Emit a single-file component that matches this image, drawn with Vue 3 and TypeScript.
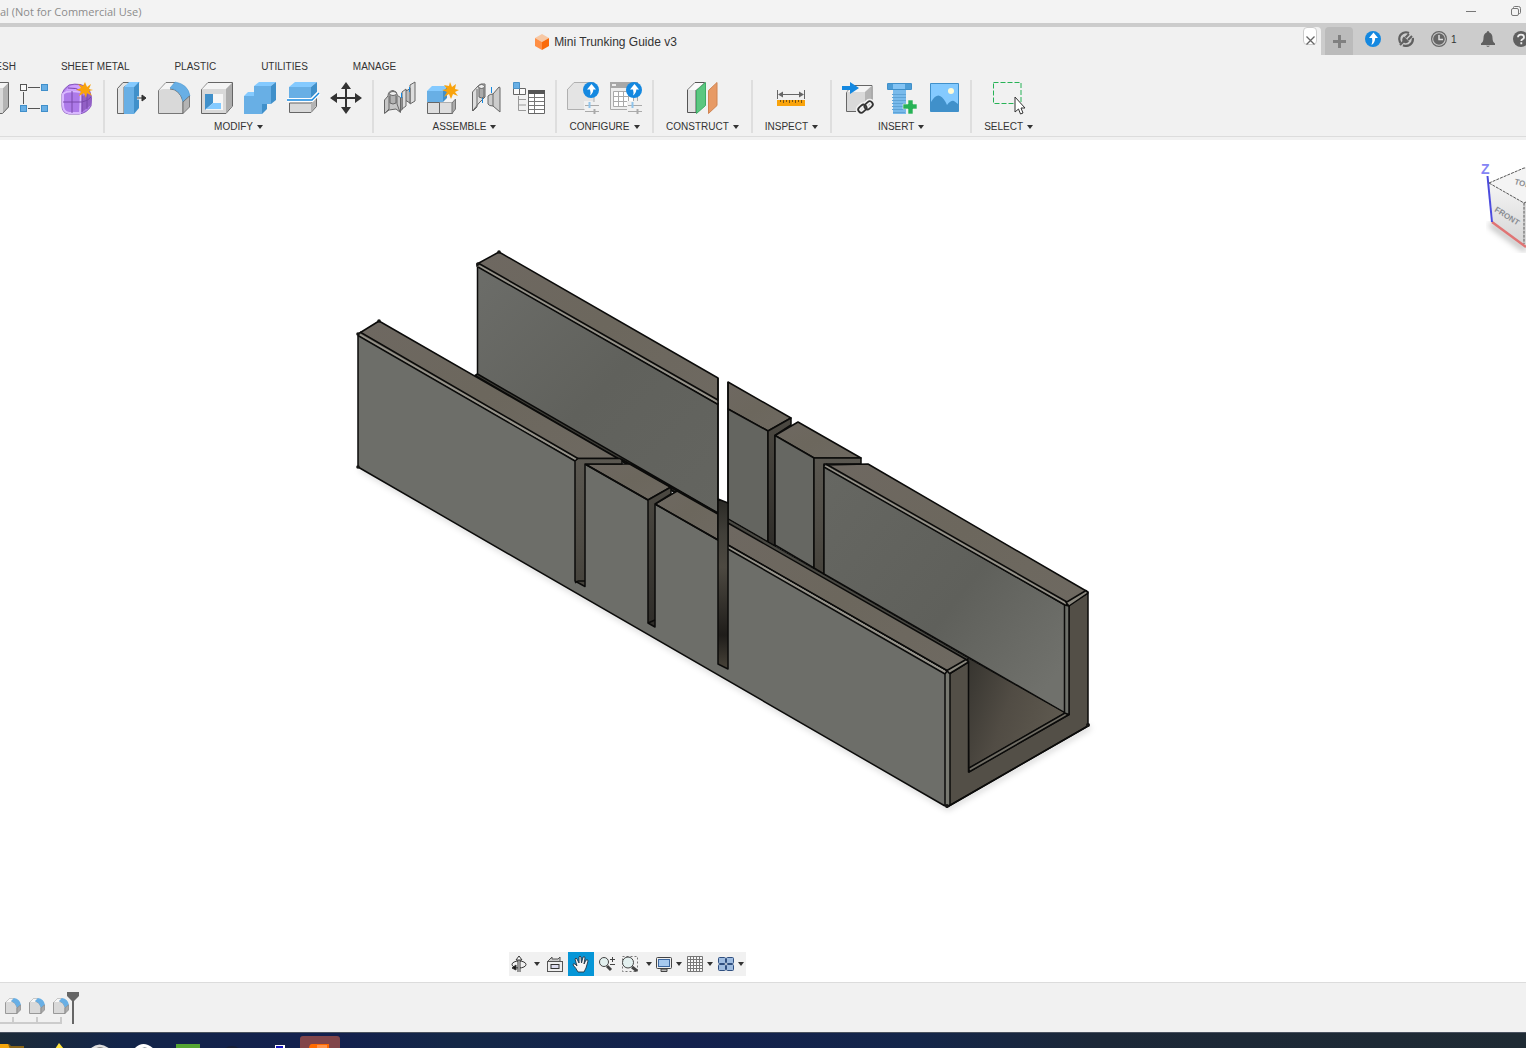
<script setup lang="ts">
import { ref } from 'vue'

const workspaceTabs: string[] = ['MESH', 'SHEET METAL', 'PLASTIC', 'UTILITIES', 'MANAGE']
const activeNav = ref<string>('pan')
const timelineFeatures: string[] = ['Fillet 1', 'Fillet 2', 'Fillet 3']
</script>

<template>
  <div class="app">
    <header class="titlebar">
      <span class="title">al (Not for Commercial Use)</span>
      <div class="window-buttons">
        <button aria-label="Minimize"><svg width="12" height="12" viewBox="0 0 12 12"><path d="M1 5.500h10" stroke="#777" fill="none" /></svg></button>
        <button aria-label="Restore"><svg width="12" height="12" viewBox="0 0 12 12" fill="none" stroke="#777"><rect x="1.500" y="2.500" width="7" height="7" rx="1.500" /><path d="M3.500 2V1.500a1 1 0 0 1 1-1h4a2 2 0 0 1 2 2v4a1 1 0 0 1-1 1H9" /></svg></button>
      </div>
    </header>

    <div class="docbar">
      <div class="doc-tab">
        <div class="doc-name">
          <svg width="14" height="16" viewBox="0 0 14 16"><path d="M7 0l7 4-7 4-7-4z" fill="#f7c8a4" /><path d="M0 4l7 4v8l-7-4z" fill="#ff8f45" /><path d="M14 4L7 8v8l7-4z" fill="#fa6a0a" /></svg>
          <span>Mini Trunking Guide v3</span>
        </div>
        <button class="close" aria-label="Close document"><svg width="9" height="9" viewBox="0 0 9 9"><path d="M.5.500l8 8M8.500.500l-8 8" stroke="#666" stroke-width="1.300" /></svg></button>
      </div>
      <div class="account">
        <button class="new-tab" aria-label="New design"><svg width="13" height="13" viewBox="0 0 13 13"><path d="M6.500 0v13M0 6.500h13" stroke="#808080" stroke-width="3" /></svg></button>
        <button aria-label="Updates"><svg width="16" height="16" viewBox="0 0 16 16"><circle cx="8" cy="8" r="8" fill="#1488e0" /><path d="M8.500 1.500L13 7h-2.800q0 4.500-3.700 7Q8 10 7 7H4z" fill="#fff" /></svg></button>
        <button aria-label="Extensions"><svg width="16" height="16" viewBox="0 0 16 16"><path d="M11 2Q8 .5 5 2 1 4 1.300 8.500q.2 2 1.200 3.500M5 14.200q3 1.600 6.500-.2 4-2.500 3.300-7" fill="none" stroke="#606060" stroke-width="2.200" /><path d="M2 14l4-4" stroke="#606060" stroke-width="2.200" /><path d="M6 5.500l5 5q-2 2.500-4.500 1.500L4.500 10Q3.500 7.500 6 5.500z" fill="#606060" /><path d="M7.500 6.500L11 3M10 9l4-4" stroke="#606060" stroke-width="2" /></svg></button>
        <button class="jobs" aria-label="Job status, 1"><svg width="16" height="16" viewBox="0 0 16 16"><circle cx="8" cy="8" r="7.400" fill="#ccc" stroke="#666" stroke-width="1.200" /><circle cx="8" cy="8" r="5.800" fill="#666" /><path d="M8 4v4.500h4" fill="none" stroke="#ddd" stroke-width="1.500" /></svg><span>1</span></button>
        <button class="bell" aria-label="Notifications"><svg width="14" height="16" viewBox="0 0 14 16"><path d="M7 0q1.300 0 1.300 1.500Q11.500 2.500 11.500 7q0 4 2.500 5.500V14H0v-1.500Q2.500 11 2.500 7q0-4.500 3.200-5.500Q5.700 0 7 0zM5 14.800h4Q7 17 5 14.800z" fill="#606060" /></svg></button>
        <button class="help" aria-label="Help"><svg width="16" height="16" viewBox="0 0 16 16"><circle cx="8" cy="8" r="8" fill="#606060" /><path d="M5 6.300Q5 3.700 8 3.700t3 2.500Q11 7.500 9.500 8.300 8.300 9 8.300 10M8.300 11.300v2" fill="none" stroke="#eee" stroke-width="1.800" /></svg></button>
      </div>
    </div>

    <section class="ribbon">
      <nav class="tabs">
        <button v-for="tab in workspaceTabs" :key="tab">{{ tab }}</button>
      </nav>

      <div class="groups">
        <div class="group create">
          <div class="tools">
            <button aria-label="Box"><svg class="ico" viewBox="0 0 32 32"><path d="M0 6h28v25H0z" fill="#d9d9d9" /><path d="M28 6l6-6v25l-6 6z" fill="#b4b4b4" /><path d="M0 6l6-5h27l-5 5z" fill="#f6f6f6" /><path d="M6 .5h27.500V25l-6 6.500H0" fill="none" stroke="#666" /></svg></button>
            <button aria-label="Pattern"><svg class="ico" viewBox="0 0 32 32" fill="none"><path d="M10 5.500h12M5.500 10v12M10 26.500h12" stroke="#555" /><rect x="2.500" y="2.500" width="6" height="6" fill="#f8f8f8" stroke="#555" /><g fill="#68afe5" stroke="#408fca"><rect x="23.500" y="2.500" width="6" height="6" /><rect x="2.500" y="23.500" width="6" height="6" /><rect x="23.500" y="23.500" width="6" height="6" /></g></svg></button>
            <button aria-label="Create form"><svg class="ico" viewBox="0 0 32 32"><path d="M1 12Q2 7 8 3q12-3 20 4 4 8 2 17-4 7-12 8H8q-7-1-7-8z" fill="#b382ec" stroke="#8958bd" /><path d="M2 12Q6 8 20 10l-1 21H8q-6-1-6-8z" fill="#ad7ae9" stroke="#d9b8ff" stroke-width="2" /><path d="M9 4q8-3 18 3-3 3-7 3Q11 7 4 9z" fill="#cf9fff" /><path d="M21 14l9-3v12l-9 7z" fill="#925fc5" /><path d="M11 9v22M2 20h19q6-1 9-5M21 12v18M26 9v18M7 6q8-1 15 4" fill="none" stroke="#7948aa" /><path d="M24 0l2 5 4-3-2 5 4 1-4 1 3 5-5-3-1 5-2-5-5 3 2-5-5-1 5-2-3-4 5 2z" fill="#f9a30b" /></svg></button>
          </div>
        </div>

        <div class="group">
          <div class="tools">
            <button aria-label="Press pull"><svg class="ico" viewBox="0 0 32 32"><path d="M8 .5h9L9 5v26.500H2.500v-25z" fill="#e4e4e4" stroke="#666" /><path d="M9 5h10v27H9z" fill="#68afe5" /><path d="M9 5l5-5h11l-6 5z" fill="#84caff" /><path d="M19 5l5-5v26l-5 6z" fill="#4090ca" /><path d="M22 16h6" stroke="#fff" stroke-width="3" /><path d="M22 16h5M27 13l4 3-4 3z" stroke="#333" fill="#333" /></svg></button>
            <button aria-label="Fillet"><svg class="ico" viewBox="0 0 32 32"><path d="M.5 31.500V8.500L8 .500h9L12 7q9 0 13 12v12.500z" fill="#d9d9d9" stroke="#777" /><path d="M1 8l7-7h9l-5 6H5z" fill="#f5f5f5" /><path d="M12 6l5-6q13 2 15 14l-7 6Q23 8 12 6z" fill="#68afe5" stroke="#4090ca" stroke-width=".500" /><path d="M25 20l6.500-6v11L25 31.500z" fill="#b4b4b4" stroke="#666" stroke-width=".800" /></svg></button>
            <button aria-label="Shell"><svg class="ico" viewBox="0 0 32 32"><path d="M.5 7.500L7 .500h24.500V24L25 31.500H.500z" fill="#d9d9d9" stroke="#666" /><path d="M1 7l6-6h24l-6 6z" fill="#f4f4f4" /><path d="M25 7l6-6v23l-6 7z" fill="#adadad" /><path d="M4 12h18v16H4z" fill="#f6f6f6" /><path d="M4 12h8v9l-8 7z" fill="#4090ca" /><path d="M12 21h8v6H5z" fill="#84caff" /></svg></button>
            <button aria-label="Combine"><svg class="ico" viewBox="0 0 32 32"><path d="M0 14h10V4h17v18h-9v10H0z" fill="#68afe5" /><path d="M10 4l5-4h17l-5 4zM0 14l4-4h6v4z" fill="#84caff" /><path d="M27 4l5-4v18l-5 4zM18 22h5v5l-5 5z" fill="#4090ca" /></svg></button>
            <button aria-label="Split body"><svg class="ico" viewBox="0 0 32 32"><path d="M2 5h22v11H2z" fill="#68afe5" /><path d="M2 5l6-5h22l-6 5z" fill="#84caff" /><path d="M24 5l6-5v10l-6 6z" fill="#4090ca" /><path d="M2.500 21H24l5.500-6v9.500L24 30.500H2.500z" fill="#d9d9d9" stroke="#666" /><path d="M24 21l5-6v9l-5 6z" fill="#b4b4b4" /><path d="M0 18h25l7-7" fill="none" stroke="#fff" stroke-width="4" /><path d="M0 18h25l7-7" fill="none" stroke="#1488e0" stroke-width="1.400" /></svg></button>
            <button aria-label="Move"><svg class="ico" viewBox="0 0 32 32"><path d="M16 4v24M4 16h24" stroke="#333" stroke-width="2" /><path d="M16 0l5 7H11zM16 32l5-7H11zM0 16l7-5v10zM32 16l-7-5v10z" fill="#333" /></svg></button>
          </div>
          <button class="label">MODIFY</button>
        </div>

        <div class="group">
          <div class="tools">
            <button aria-label="Joint"><svg class="ico" viewBox="0 0 32 32" stroke="#666" stroke-linejoin="round"><path d="M26 3l5-3v19l-5 3z" fill="#ddd" /><path d="M24 8l2-2v15l-5-3V9z" fill="#bbb" /><path d="M18 10l4-3v17l-4 3z" fill="#ddd" /><path d="M16 17l2-2v13h-3z" fill="#bbb" /><path d="M.5 18L4 14q0-5 5-5.500 4 .500 4.500 5l3 2v15L12 27l-7 1-4.500 3.500z" fill="#c6c6c6" /><path d="M1 31l4-4V14M13 14v8l3 8" fill="none" /><path d="M6 12v9q3 2 6 0v-9" fill="#b2b2b2" /><ellipse cx="9" cy="11.500" rx="3.500" ry="2" fill="#eee" /><path d="M17.500 11v5M25.500 5v5" stroke="#1488e0" /></svg></button>
            <button aria-label="New component"><svg class="ico" viewBox="0 0 32 32"><path d="M.5 20.500h12V31.500H.500zM12.500 20.500h13v11h-13z" fill="#dedede" stroke="#666" /><path d="M12.500 20.500l5-4.500H29l-4 4.500z" fill="#f5f5f5" /><path d="M25 21l3.500-4v10L25 31.500z" fill="#aaa" stroke="#777" /><path d="M0 9h16v11H0z" fill="#68afe5" /><path d="M0 9l5-5h15l-4 5z" fill="#84caff" /><path d="M16 9l4-4v11l-4 4z" fill="#4090ca" /><path d="M23 0l2 5 4-3-1 5 4 1-4 2 3 4-5-2-2 5-2-5-5 3 3-5-5-2 5-1-3-4 5 1z" fill="#f9a30b" /></svg></button>
            <button aria-label="As-built joint"><svg class="ico" viewBox="0 0 32 32" stroke="#666" stroke-linejoin="round"><path d="M2.500 10L8 4l3-2h4v13l-6 6-6.500 8z" fill="#ddd" /><path d="M9 5v10q3 2 5 0V4" fill="#aaa" /><ellipse cx="11.500" cy="4.500" rx="3" ry="2" fill="#eee" /><path d="M3 29l4-4V7" fill="none" /><path d="M18 14q2-2 5-2l6-7 1 .500V30l-7-6q-4 0-5-2z" fill="#ccc" /><path d="M23 12v12" fill="none" /><path d="M12.500 16v5M21.500 5v6" stroke="#1488e0" /></svg></button>
            <button aria-label="Bill of materials"><svg class="ico" viewBox="0 0 32 32" fill="none"><path d="M5.500 14v14.500H13M5.500 17.500H13M5.500 23H13" stroke="#999" /><path d="M.5 6.500h12v6H.500zM6.500 6.500v6" stroke="#666" fill="#fafafa" /><path d="M.5.500h6v6h-6z" fill="#68afe5" stroke="#4a92c8" /><path d="M15.500 8.500h16v23h-16z" fill="#fff" stroke="#666" /><path d="M15 8h17v4H15z" fill="#555" /><path d="M16 15.500h15M16 19.500h15M16 23.500h15M16 27.500h15M21.500 12v19" stroke="#777" /></svg></button>
          </div>
          <button class="label">ASSEMBLE</button>
        </div>

        <div class="group">
          <div class="tools">
            <button aria-label="Configure design"><svg class="ico" viewBox="0 0 32 32"><path d="M.5 7.500L7 .500h20V20M.500 7v20.500h17" fill="#e4e4e4" stroke="#b0b0b0" /><path d="M1 7h24v12h-8v8H1z" fill="#e4e4e4" /><path d="M18 23.500h14M18 29.500h14" stroke="#aaa" /><path d="M22.500 20v6" stroke="#8fc4ec" stroke-width="2" /><path d="M27.500 27v5" stroke="#aaa" stroke-width="2" /><circle cx="24" cy="8" r="8" fill="#1488e0" /><path d="M24.500 2L29 7.500h-2.700q0 3.500-3.300 6 1-3 0-6h-3z" fill="#fff" /></svg></button>
            <button aria-label="Configuration table"><svg class="ico" viewBox="0 0 32 32"><path d="M.5.500h27v27H.500z" fill="#eee" stroke="#aaa" /><path d="M0 0h28v6H0z" fill="#a8a8a8" /><path d="M2 2h4v2H2z" fill="#eee" /><path d="M3.500 9.500h20v15h-20zM3.500 14.500h20M3.500 19.500h20M8.500 9.500v15M13.500 9.500v15M18.500 9.500v15" fill="#fff" stroke="#aaa" /><path d="M17 19h15v13H17z" fill="#f1f1f1" /><path d="M18 23.500h14M18 29.500h14" stroke="#aaa" /><path d="M22.500 20v6" stroke="#8fc4ec" stroke-width="2" /><path d="M27.500 27v5" stroke="#aaa" stroke-width="2" /><circle cx="24" cy="8" r="8" fill="#1488e0" /><path d="M24.500 2L29 7.500h-2.700q0 3.500-3.300 6 1-3 0-6h-3z" fill="#fff" /></svg></button>
          </div>
          <button class="label">CONFIGURE</button>
        </div>

        <div class="group wide">
          <div class="tools">
            <button aria-label="Offset plane"><svg class="ico" viewBox="0 0 32 32"><path d="M1.500 8L9 .500h9.500L10 8v22.500H1.500z" fill="#e2e2e2" stroke="#555" /><path d="M2 8l7-7h9l-8 7z" fill="#fafafa" /><path d="M10.500 8.500l9-8v23l-9 8z" fill="#5bc780" stroke="#3dad65" /><path d="M22.500 8.500l8.500-8v23l-8.500 8z" fill="#e79a65" stroke="#cf8452" /></svg></button>
          </div>
          <button class="label">CONSTRUCT</button>
        </div>

        <div class="group wide">
          <div class="tools">
            <button aria-label="Measure"><svg class="ico" viewBox="0 0 32 32"><path d="M2.500 8v9M29.500 8v9M4 12.500h24" stroke="#666" /><path d="M3 12.500l5-3v6zM29 12.500l-5-3v6z" fill="#666" /><path d="M2 18h28v6H2z" fill="#f9a30b" /><path d="M5.500 18v2M8.500 18v3M11.500 18v2M14.500 18v3M17.500 18v2M20.500 18v3M23.500 18v2M26.500 18v3" stroke="#7a5410" /></svg></button>
          </div>
          <button class="label">INSPECT</button>
        </div>

        <div class="group">
          <div class="tools">
            <button aria-label="Insert derive"><svg class="ico" viewBox="0 0 32 32"><path d="M4.500 10.500L10 3.500h20V22l-7 7.500H4.500z" fill="#d9d9d9" stroke="#666" /><path d="M5 10l6-6h19l-7 6z" fill="#f4f4f4" /><path d="M23 10l6.500-6v18L23 29z" fill="#b5b5b5" /><path d="M0 4h8V0l9 6-9 6V8H0z" fill="#1488e0" /><g fill="none" stroke="#f1f1f1" stroke-width="5"><rect x="16" y="24" width="9" height="6" rx="3" transform="rotate(-42 20 27)" /><rect x="22" y="20" width="9" height="6" rx="3" transform="rotate(-42 27 23)" /></g><g fill="none" stroke="#333" stroke-width="1.800"><rect x="16" y="24" width="9" height="6" rx="3" transform="rotate(-42 20 27)" /><rect x="22" y="20" width="9" height="6" rx="3" transform="rotate(-42 27 23)" /></g></svg></button>
            <button aria-label="Insert fastener"><svg class="ico" viewBox="0 0 32 32"><path d="M3 1h23v7H3z" fill="#4d9dd6" /><path d="M8 1h12v7H8z" fill="#84c4f4" /><path d="M2.500 1.500h24v6h-24z" fill="none" stroke="#4090ca" /><path d="M8 8h13v24H8z" fill="#79baeb" /><path d="M7 12.500h14M7 15.500h14M7 18.500h14M7 21.500h14M7 24.500h14M7 27.500h14M8 30.500h12" stroke="#5fa3d6" /><path d="M23 18h5v4h4v5h-4v5h-5v-5h-5v-5h5z" fill="#27b256" stroke="#f1f1f1" stroke-width=".600" /></svg></button>
            <button aria-label="Canvas"><svg class="ico" viewBox="0 0 32 32"><path d="M2.500 1.500h28v28h-28z" fill="#84caff" stroke="#4090ca" /><path d="M3 20q5-8 9-6 4 2 7 9 4-5 7-4l4 3v8H3z" fill="#4090ca" /><circle cx="23" cy="9" r="3" fill="#fffbd6" /></svg></button>
          </div>
          <button class="label">INSERT</button>
        </div>

        <div class="group wide last">
          <div class="tools">
            <button aria-label="Select"><svg class="ico" viewBox="0 0 32 32"><path d="M.5.500h27.500v21H.500z" fill="none" stroke="#27b256" stroke-dasharray="5 2" /><path d="M22 15v15l3.500-3 2 5 2.500-1-2-5h4z" fill="#fff" stroke="#333" /></svg></button>
          </div>
          <button class="label">SELECT</button>
        </div>
      </div>
    </section>

    <main class="viewport">
      <svg class="scene" viewBox="0 140 1526 842" role="img" aria-label="Trunking guide model">
        <defs>
          <linearGradient id="inner" x1="0" y1="0" x2="1" y2="1"><stop offset="0" stop-color="#6c6d69" /><stop offset=".5" stop-color="#60615c" /><stop offset="1" stop-color="#646560" /></linearGradient>
          <linearGradient id="innerRight" x1="0" y1="0" x2="1" y2=".8"><stop offset="0" stop-color="#666762" /><stop offset=".6" stop-color="#5f605b" /><stop offset="1" stop-color="#70716c" /></linearGradient>
          <linearGradient id="top" x1="0" y1="0" x2="1" y2="1"><stop offset="0" stop-color="#6e6861" /><stop offset=".5" stop-color="#6c675d" /><stop offset="1" stop-color="#6e6961" /></linearGradient>
          <linearGradient id="floor" x1="0" y1="0" x2="1" y2=".4"><stop offset="0" stop-color="#36342f" /><stop offset=".5" stop-color="#514c44" /><stop offset="1" stop-color="#5e594f" /></linearGradient>
          <linearGradient id="gap" x1="0" y1="0" x2="0" y2="1"><stop offset="0" stop-color="#2a2925" /><stop offset=".2" stop-color="#413f39" /><stop offset=".4" stop-color="#4d4941" /><stop offset=".8" stop-color="#1f1d1a" /><stop offset="1" stop-color="#484339" /></linearGradient>
          <linearGradient id="slot" x1="0" y1="0" x2="0" y2="1"><stop offset="0" stop-color="#5b5851" /><stop offset=".6" stop-color="#504d46" /><stop offset="1" stop-color="#46433c" /></linearGradient>
          <linearGradient id="slotDark" x1="0" y1="0" x2="0" y2="1"><stop offset="0" stop-color="#4c4942" /><stop offset="1" stop-color="#2f2d29" /></linearGradient>
          <linearGradient id="cube" x1="0" y1="0" x2="0" y2="1"><stop offset="0" stop-color="#f4f4f4" /><stop offset="1" stop-color="#d5d5d5" /></linearGradient>
          <filter id="soft" x="-10%" y="-10%" width="120%" height="120%"><feGaussianBlur stdDeviation="3" /></filter>
        </defs>

        <path d="M360 468L948 808L1090 727" fill="none" stroke="#000" stroke-opacity=".2" stroke-width="4" filter="url(#soft)" />

        <g stroke="#0b0b0a" stroke-width="1.500" stroke-linejoin="round">
          <!-- rear wall, left of the square slot -->
          <path d="M477 264L499 252L718 378V404L477 266z" fill="url(#top)" />
          <path d="M477.500 266L718 404V518L477.500 376z" fill="url(#inner)" />
          <path d="M478 265.500L718 402.500" stroke="#96938a" stroke-width="2.500" />
          <path d="M479 263.500L718 400M478 267L718 404.500" fill="none" />
          <path d="M475 375.500L477.500 374L718 513L718 517z" fill="#3c3b35" />

          <!-- rear blocks between the slots -->
          <path d="M728 382L791 418L768 431L728 409z" fill="url(#top)" />
          <path d="M728 409L768 431V542L728 519z" fill="#646560" />
          <path d="M768 431L791 418V425L775 435.500V546L768 542z" fill="url(#slotDark)" />
          <path d="M775 435.500L798 422L861 458H814z" fill="url(#top)" />
          <path d="M775 435.500L814 458V568L775 545z" fill="#666762" />
          <path d="M814 458H861V464H824V574L814 568z" fill="url(#slot)" />

          <!-- rear wall, right part -->
          <path d="M824 465L868 464L1088 592L1067 605z" fill="url(#top)" />
          <path d="M824 466L1065 605V713L824 574z" fill="url(#innerRight)" />
          <path d="M825 466L1066 604" stroke="#96938a" stroke-width="2.500" />
          <path d="M826 464L1067 602M824 467L1065 605" fill="none" />
          <path d="M728 519L968 658L967 661L728 525z" fill="#4a4943" stroke-width="1" />

          <!-- channel floor and end face -->
          <path d="M968 658L1065 713L969 768z" fill="url(#floor)" stroke-width="1" />
          <path d="M949 674L968.500 662V772L1069 714.500V605L1088 593V726L949 806z" fill="#534f47" />
          <path d="M969 768L1065 713L1069 714.500L969 772z" fill="#706d64" />
          <path d="M1064.500 605L1069 606V714.500L1064.500 713z" fill="#6d6f69" />
          <path d="M1066 602.500L1086 590.500L1088 593L1069 606z" fill="#8b887e" />

          <!-- front wall -->
          <path d="M358 334V467L947 807V674L728 546L718 540L655 502L648 498L585 463L575 460z" fill="#6d6e69" stroke="none" />
          <path d="M358 334L379 321L618 458.500H578L575 460z" fill="url(#top)" />
          <path d="M359 334.500L576 459.500" stroke="#96938a" stroke-width="2.500" />
          <path d="M360 332L578 458.500M358 335.500L575 461" fill="none" />
          <path d="M585 464H631L671 487L648 500z" fill="url(#top)" />
          <path d="M655 504L678 490.500L718 513.500V540z" fill="url(#top)" />
          <path d="M728 523L967 660L947 671L728 545z" fill="url(#top)" />
          <path d="M728 547L946 672.500" stroke="#96938a" stroke-width="2.500" />
          <path d="M728 545L947 670.500M728 549L945 674" fill="none" />
          <path d="M947 670.500L966 659.500L968.500 662L949 674z" fill="#8b887e" />
          <path d="M945 674L947 671L950 674V805L947 807L945 805z" fill="#777870" />
          <path d="M358 335V467L945 806M585 464L648 500M655 504L718 540M947 807L1088 726" fill="none" />

          <!-- slots cut in the front wall -->
          <path d="M575 461L578 458.500H620L622 460V464H585V586.500L575 581z" fill="url(#slot)" />
          <path d="M575 583L578 581H585" fill="none" />
          <path d="M648 500L671 487V494L655 504V627L648 623z" fill="url(#slotDark)" />
          <path d="M648 623L655 620" fill="none" />
          <path d="M621 459L718 514" fill="none" stroke-width="2" />
          <path d="M718 499L728 503V669L718 664z" fill="url(#gap)" />
          <path d="M718 378V500M728 382V504" fill="none" />
        </g>
        <g fill="#151513"><circle cx="499" cy="252" r="1.800" /><circle cx="478" cy="264" r="1.800" /><circle cx="379" cy="321" r="1.800" /><circle cx="358" cy="334" r="1.800" /><circle cx="358" cy="467" r="1.800" /><circle cx="947" cy="806" r="2" /><circle cx="1088" cy="725" r="2" /></g>

        <!-- orientation cube -->
        <path d="M1490 224L1526 250" stroke="#000" stroke-opacity=".3" stroke-width="5" filter="url(#soft)" />
        <path d="M1489 183L1526 167V203L1524 203z" fill="#f4f4f4" />
        <path d="M1489 183L1524 203V245L1493 222z" fill="url(#cube)" />
        <path d="M1524 203L1526 202V245H1524z" fill="#ddd" />
        <path d="M1489 183L1524 168H1526M1489 183L1524 203V244M1524 203L1526 202" fill="none" stroke="#555" stroke-width="1" stroke-dasharray="3 1" />
        <path d="M1492 222L1526 247" stroke="#e07474" stroke-width="2.500" />
        <path d="M1487.500 176L1492 222" stroke="#4b4bdd" stroke-width="2" />
        <text class="axis" x="1481" y="174">Z</text>
        <text class="face" x="1494" y="211" transform="rotate(32 1494 211)">FRONT</text>
        <text class="face" x="1514" y="184" transform="rotate(14 1514 184)">TOP</text>
      </svg>

      <div class="navbar">
        <button class="drop orbit" aria-label="Orbit"><svg width="16" height="16" viewBox="0 0 16 16" fill="none" stroke="#333"><ellipse cx="8" cy="8.500" rx="7" ry="3.500" /><path d="M8 16V3" stroke-width="3" /><path d="M8 16V3" stroke="#fff" /><path d="M8 0l3 4H5z" fill="#fff" /><path d="M1 12l4-3v5z" fill="#111" /></svg></button>
        <button aria-label="Look at"><svg width="16" height="16" viewBox="0 0 16 16" fill="none" stroke="#555"><rect x=".5" y="5.500" width="15" height="10" fill="#eee" /><rect x="4" y="8.500" width="8" height="4" fill="#dde" stroke="#333" /><path d="M1 5L5 1v2h6l2-2v4" fill="#ccc" /></svg></button>
        <button :class="{ active: activeNav === 'pan' }" aria-label="Pan" @click="activeNav = 'pan'"><svg width="18" height="18" viewBox="0 0 18 18"><path d="M6 17Q4 13 1 10q0-2 2-1l2 2-2-7q1-2 2 0l2 4V2q1-2 2 0l.500 6L11 2q2-1 2 1l-1 6 2-4q2-1 2 1l-2 7-2 4z" fill="#f4f4f4" stroke="#234" stroke-width=".900" /></svg></button>
        <button aria-label="Zoom"><svg width="18" height="16" viewBox="0 0 18 16" fill="none" stroke="#444"><circle cx="6" cy="6" r="4.500" fill="#e3f0ef" /><path d="M9 10l4 4" stroke-width="3" /><path d="M12 3.500h5M14.500 1v5M12 8.500h5" /></svg></button>
        <button class="drop fit" aria-label="Fit"><svg width="18" height="16" viewBox="0 0 18 16" fill="none" stroke="#444"><rect x="1.500" y=".5" width="15" height="15" stroke-dasharray="2 2" stroke="#777" /><circle cx="7" cy="6.500" r="5.500" fill="#e3f0ef" /><path d="M11 11l5 4" stroke-width="3" /></svg></button>
        <button class="drop" aria-label="Display settings"><svg width="16" height="16" viewBox="0 0 16 16" stroke="#444"><rect x=".5" y="1.500" width="15" height="11" rx="1" fill="#eee" /><rect x="2.500" y="3.500" width="11" height="7" fill="#a7c9ee" stroke="#3c67a0" /><path d="M5 13h6v2.500H5z" fill="#bbb" /></svg></button>
        <button class="drop" aria-label="Grid and snaps"><svg width="16" height="16" viewBox="0 0 16 16"><path d="M.5.500h15v15H.500zM3.500 0v16M6.500 0v16M9.500 0v16M12.500 0v16M0 3.500h16M0 6.500h16M0 9.500h16M0 12.500h16" fill="#f8f8f8" stroke="#777" /></svg></button>
        <button class="drop" aria-label="Viewports"><svg width="16" height="14" viewBox="0 0 16 14" fill="#9fbce0" stroke="#2f4f80"><rect x=".5" y=".5" width="7" height="6" rx="1" /><rect x="8.500" y=".5" width="7" height="6" rx="1" /><rect x=".5" y="7.500" width="7" height="6" rx="1" /><rect x="8.500" y="7.500" width="7" height="6" rx="1" /></svg></button>
      </div>
    </main>

    <footer class="timeline">
      <button v-for="feature in timelineFeatures" :key="feature" class="feature" :aria-label="feature">
        <svg width="16" height="16" viewBox="0 0 16 16"><path d="M.5 15.500V4.500l4-4H9L6 3q5 1 6 6v6.500z" fill="#d9d9d9" stroke="#999" /><path d="M1 4l3.500-3.500H9L6 4z" fill="#f7f7f7" /><path d="M6 3l3-3q6 1 7 7l-4 3Q11 5 6 3z" fill="#68afe5" /><path d="M12 10l3.500-3v5L12 15.500z" fill="#aaa" stroke="#888" stroke-width=".700" /></svg>
      </button>
      <svg class="marker" width="12" height="32" viewBox="0 0 12 32"><path d="M0 0h12v4L7 9v23H5V9L0 4z" fill="#666" /></svg>
    </footer>

    <div class="taskbar">
      <svg width="360" height="16" viewBox="0 0 360 16">
        <path d="M0 11h9l2 2h13v3H0z" fill="#886417" /><path d="M0 11h8l2 5H0z" fill="#f5a50a" />
        <path d="M59 10l5 6h-9z" fill="#ffe33d" />
        <path d="M90 16q9-9 20 0z" fill="#ddd" /><path d="M95 16q5-4 10 0z" fill="#888" />
        <path d="M134 16q9-10 20 0z" fill="#fff" /><path d="M140 16q5-3 9 0z" fill="#345" />
        <path d="M176 11h24v5h-24z" fill="#55a532" />
        <path d="M224 16q8-6 16 0z" fill="#171f36" />
        <path d="M275 12h10v4h-10z" fill="#fff" /><path d="M276 13h7v3h-7z" fill="#1212b8" />
        <path d="M300 16V6q0-3 3-3h34q3 0 3 3v10z" fill="#81454a" />
        <path d="M309 16q0-5 3-5h17v5z" fill="#ff6a00" /><path d="M317 12h10v4h-10z" fill="#ff934a" />
      </svg>
    </div>
  </div>
</template>

<style>
body {
  margin: 0;
}
</style>

<style scoped>
.app {
  display: flex;
  flex-direction: column;
  min-height: 100vh;
  overflow: hidden;
  background: #f1f1f1;
  color: #333;
  font-family: "Liberation Sans", Arial, sans-serif;
}
button {
  display: flex;
  align-items: center;
  justify-content: center;
  padding: 0;
  border: 0;
  background: none;
  color: inherit;
  font: inherit;
}
svg {
  display: block;
  flex: none;
}

.titlebar {
  display: flex;
  justify-content: space-between;
  align-items: center;
  height: 23px;
  background: #f3f3f3;
  border-bottom: 4px solid #ccc;
}
.title {
  color: #8c8c8c;
  font: 11px/24px "Open Sans", "Noto Sans", sans-serif;
}
.window-buttons {
  display: flex;
  gap: 33px;
  padding-right: 4px;
}

.docbar {
  display: flex;
  height: 28px;
  background: #ccc;
}
.doc-tab {
  display: flex;
  flex: 1;
  background: #f1f1f1;
  border-top-right-radius: 4px;
}
.doc-name {
  display: flex;
  flex: 1;
  align-items: center;
  justify-content: center;
  gap: 5px;
  padding-top: 2px;
  padding-left: 4px;
  padding-right: 95px;
  font-size: 12px;
  line-height: 26px;
}
.close {
  width: 14px;
  height: 18px;
  margin-right: 4px;
  padding-top: 9px;
  background: #fff;
  border: 1px solid #ccc;
  border-radius: 4px;
  box-sizing: border-box;
}
.account {
  display: flex;
  width: 201px;
  padding-left: 4px;
  overflow: hidden;
}
.account button {
  flex: none;
  height: 24px;
  margin-right: 17px;
}
.account .new-tab {
  width: 28px;
  height: 28px;
  margin-right: 12px;
  background: #bbb;
  border-radius: 4px 4px 0 0;
}
.account .jobs {
  gap: 4px;
  margin-right: 24px;
  font-size: 10px;
}
.account .bell {
  margin-right: 18px;
}

.ribbon {
  height: 85px;
  border-bottom: 3px solid #f1f1f1;
  box-sizing: border-box;
  box-shadow: inset 0 -1px #dcdcdc;
}
.tabs {
  display: flex;
  gap: 45px;
  height: 22px;
  margin-left: -13px;
  font-size: 10px;
}
.groups {
  display: flex;
  padding-top: 3px;
}
.group {
  display: flex;
  flex: none;
  flex-direction: column;
  align-items: center;
  height: 53px;
  padding: 0 10px;
  border-right: 2px solid #dedede;
  box-sizing: border-box;
}
.group.create {
  align-items: flex-end;
  width: 105px;
}
.group.wide {
  padding: 0 12px;
}
.group.last {
  border-right: 0;
}
.tools {
  display: flex;
  gap: 11px;
}
.ico {
  width: 32px;
  height: 32px;
  margin-top: 2px;
  overflow: visible;
}
.label {
  gap: 4px;
  height: 24px;
  padding-top: 3px;
  font-size: 10px;
  line-height: 20px;
}
.label::after,
.drop::after {
  content: "";
  border: 3px solid transparent;
  border-top: 4px solid #333;
  border-bottom: 0;
}

.viewport {
  position: relative;
  flex: 1;
  background: #fff;
}
.scene {
  width: 100%;
  height: auto;
}
.axis {
  fill: #8585f5;
  font-size: 14px;
  font-weight: bold;
}
.face {
  fill: #8a8d92;
  font-size: 8px;
  font-weight: bold;
}
.navbar {
  position: absolute;
  bottom: 6px;
  left: 509px;
  display: flex;
  height: 24px;
  background: #f1f1f1;
}
.navbar button {
  width: 26px;
}
.navbar .drop {
  gap: 4px;
  width: 31px;
}
.navbar .orbit,
.navbar .fit {
  gap: 7px;
  width: 33px;
}
.navbar .active {
  background: #0696d7;
}

.timeline {
  display: flex;
  height: 49px;
  padding-left: 5px;
  border-top: 1px solid #dcdcdc;
}
.feature {
  position: relative;
  width: 16px;
  height: 16px;
  margin: 15px 8px 0 0;
}
.feature::after {
  content: "";
  position: absolute;
  top: 19px;
  right: 7px;
  width: 24px;
  height: 5px;
  border: solid #ccc;
  border-width: 0 2px 2px 0;
}
.marker {
  position: relative;
  margin-top: 9px;
  margin-left: -10px;
}
.taskbar {
  height: 16px;
  overflow: hidden;
  border-top: 1px solid #4a5260;
  box-sizing: border-box;
  background: linear-gradient(90deg, #1c2b38, #13254a 8%, #13204e 22%, #142847 30%, #13214e 45%, #14264a 60%, #1c2838 72%, #1f2b34);
}
</style>
